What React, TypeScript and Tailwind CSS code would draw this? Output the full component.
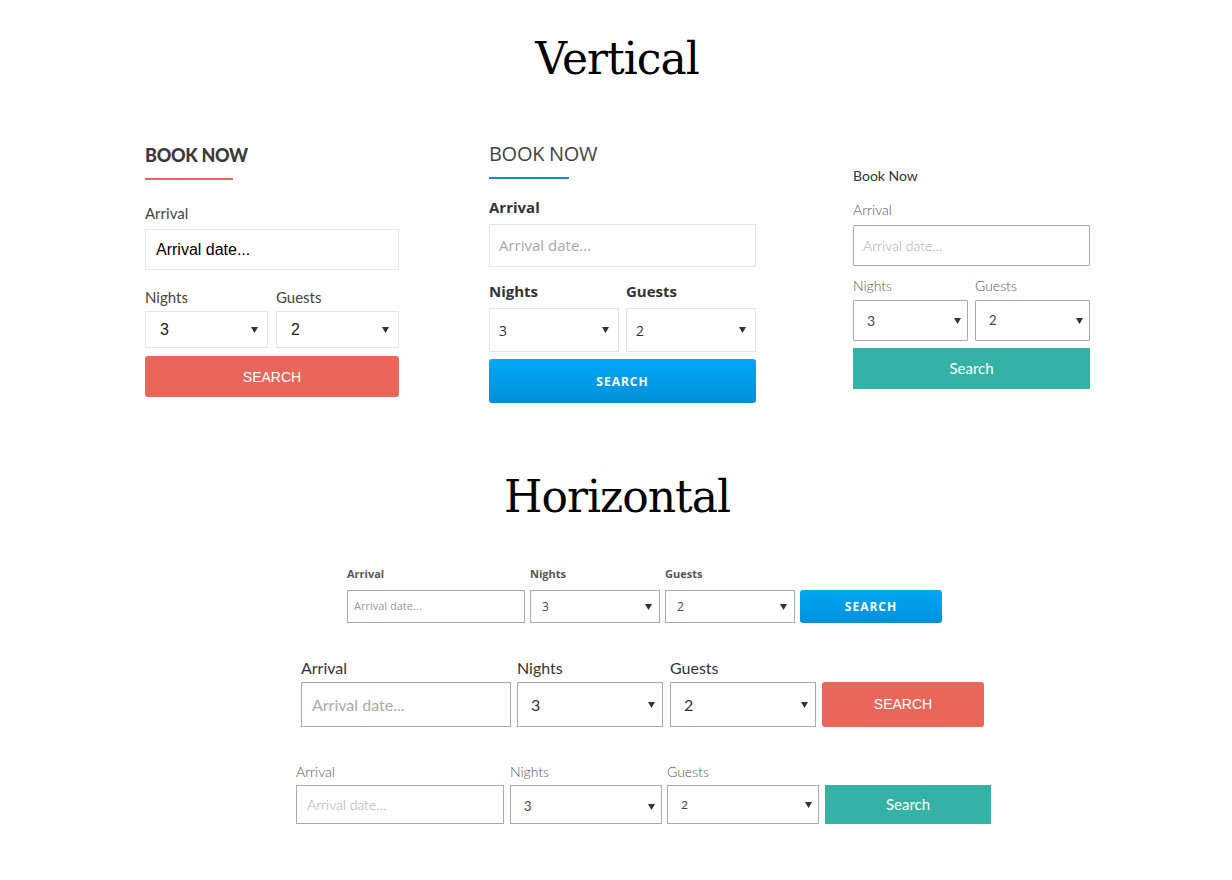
import React from "react";

const LATO = "font-['Lato','Noto_Sans',sans-serif]";
const OPEN = "font-['Open_Sans','Noto_Sans',sans-serif]";
const ARIAL = "font-['Liberation_Sans',Arial,sans-serif]";
const SLAB = "font-['DejaVu_Serif',serif]";

function Arrow({ className = "" }: { className?: string }) {
  return (
    <svg width="7" height="6" viewBox="0 0 7 6" className={className}>
      <path d="M0 0 H7 L3.5 6 Z" fill="#333" />
    </svg>
  );
}

function Box({
  className,
  children,
  arrow,
  arrowClass = "mr-[9px]",
}: {
  className: string;
  children: React.ReactNode;
  arrow?: boolean;
  arrowClass?: string;
}) {
  return (
    <div className={`flex items-center justify-between bg-white ${className}`}>
      <span>{children}</span>
      {arrow && <Arrow className={arrowClass} />}
    </div>
  );
}

export default function App() {
  return (
    <div className="w-[1232px] min-h-[880px] bg-white text-[#444]">
      {/* Title Vertical */}
      <div className="pt-[37px] flex justify-center">
        <h1 className={`${SLAB} text-[44px] leading-[44px] text-black font-normal tracking-[-1px] pl-[2px]`}>
          Vertical
        </h1>
      </div>

      {/* Vertical forms */}
      <div className="mt-[61px] flex items-start pl-[145px]">
        {/* Column 1 */}
        <div className={`${LATO} w-[254px] mt-[2px] flex flex-col`}>
          <div className="h-[22px] leading-[22px] text-[18px] font-black tracking-[-0.3px] text-[#3a3a3a]">BOOK NOW</div>
          <div className="mt-[12px] h-[2px] w-[88px] bg-[#e8665a]" />
          <div className="mt-[24px] h-[18px] leading-[18px] text-[15px] text-[#444]">Arrival</div>
          <Box className={`mt-[7px] h-[41px] border border-[#e6e6e6] pl-[10px] ${ARIAL} text-[16px] text-black`}>
            Arrival date...
          </Box>
          <div className="mt-[18px] flex gap-[8px] h-[18px] leading-[18px] text-[15px] text-[#444]">
            <div className="w-[123px]">Nights</div>
            <div className="w-[123px]">Guests</div>
          </div>
          <div className="mt-[5px] flex gap-[8px]">
            <Box arrow className={`w-[123px] h-[37px] border border-[#e6e6e6] pl-[14px] ${ARIAL} text-[16px] text-[#222]`}>
              3
            </Box>
            <Box arrow className={`w-[123px] h-[37px] border border-[#e6e6e6] pl-[14px] ${ARIAL} text-[16px] text-[#222]`}>
              2
            </Box>
          </div>
          <div className={`mt-[8px] h-[41px] pt-[1px] rounded-[3px] bg-[#e8665a] flex items-center justify-center ${ARIAL} text-[14px] text-white`}>
            SEARCH
          </div>
        </div>

        {/* Column 2 */}
        <div className={`${OPEN} w-[267px] ml-[90px] flex flex-col`}>
          <div className="h-[24px] leading-[24px] text-[20px] text-[#444] tracking-[-0.3px]">BOOK NOW</div>
          <div className="mt-[11px] h-[2px] w-[80px] bg-[#0a8fdc]" />
          <div className="mt-[18px] h-[20px] leading-[20px] text-[15px] font-bold text-[#333]">Arrival</div>
          <Box className="mt-[7px] h-[43px] border border-[#e6e6e6] pl-[9px] text-[15px] text-[#a8a8a8]">
            Arrival date...
          </Box>
          <div className="mt-[14px] flex gap-[7px] h-[20px] leading-[20px] text-[15px] font-bold text-[#333]">
            <div className="w-[130px]">Nights</div>
            <div className="w-[130px]">Guests</div>
          </div>
          <div className="mt-[7px] flex gap-[7px]">
            <Box arrow className="w-[130px] h-[44px] border border-[#e6e6e6] pl-[9px] text-[14px] text-[#333]">
              3
            </Box>
            <Box arrow className="w-[130px] h-[44px] border border-[#e6e6e6] pl-[9px] text-[14px] text-[#333]">
              2
            </Box>
          </div>
          <div className="mt-[7px] h-[44px] pt-[1px] rounded-[3px] bg-gradient-to-b from-[#00a8f3] to-[#008fda] flex items-center justify-center text-[12px] font-bold tracking-[1px] text-white">
            SEARCH
          </div>
        </div>

        {/* Column 3 */}
        <div className={`${LATO} w-[237px] ml-[97px] mt-[25px] flex flex-col`}>
          <div className="h-[18px] leading-[18px] text-[14px] text-[#333]">Book Now</div>
          <div className="mt-[16px] h-[18px] leading-[18px] text-[14px] font-light text-[#555]">Arrival</div>
          <Box className="mt-[6px] h-[41px] border border-[#aaa] rounded-[1px] pl-[9px] text-[14px] font-light text-[#aaa]">
            Arrival date...
          </Box>
          <div className="mt-[11px] flex gap-[7px] h-[18px] leading-[18px] text-[14px] font-light text-[#555]">
            <div className="w-[115px]">Nights</div>
            <div className="w-[115px]">Guests</div>
          </div>
          <div className="mt-[5px] flex gap-[7px]">
            <Box arrow arrowClass="mr-[6px]" className="w-[115px] h-[41px] border border-[#aaa] rounded-[1px] pl-[13px] text-[14px] text-[#444]">
              3
            </Box>
            <Box arrow arrowClass="mr-[6px]" className="w-[115px] h-[41px] border border-[#aaa] rounded-[1px] pl-[13px] text-[13px] text-[#444]">
              2
            </Box>
          </div>
          <div className="mt-[7px] h-[41px] bg-[#35b2a6] flex items-center justify-center text-[15px] text-white">
            Search
          </div>
        </div>
      </div>

      {/* Title Horizontal */}
      <div className="mt-[72px] flex justify-center">
        <h1 className={`${SLAB} text-[44px] leading-[44px] text-black font-normal tracking-[-1px] pl-[2px]`}>
          Horizontal
        </h1>
      </div>

      {/* Row 1 - Open Sans small */}
      <div className={`${OPEN} mt-[48px] pl-[347px] flex flex-col`}>
        <div className="flex gap-[5px] h-[14px] leading-[14px] text-[11px] font-bold text-[#555]">
          <div className="w-[178px]">Arrival</div>
          <div className="w-[130px]">Nights</div>
          <div className="w-[130px]">Guests</div>
        </div>
        <div className="mt-[9px] flex gap-[5px]">
          <Box className="w-[178px] h-[33px] border border-[#aaa] pl-[6px] text-[11px] text-[#999]">
            Arrival date...
          </Box>
          <Box arrow arrowClass="mr-[7px]" className="w-[130px] h-[33px] border border-[#aaa] pl-[11px] text-[12px] text-[#444]">
            3
          </Box>
          <Box arrow arrowClass="mr-[7px]" className="w-[130px] h-[33px] border border-[#aaa] pl-[11px] text-[12px] text-[#444]">
            2
          </Box>
          <div className="w-[142px] h-[33px] rounded-[3px] bg-gradient-to-b from-[#00a8f3] to-[#008fda] flex items-center justify-center text-[12px] font-bold tracking-[1px] text-white">
            SEARCH
          </div>
        </div>
      </div>

      {/* Row 2 - Lato red */}
      <div className={`${LATO} mt-[36px] pl-[301px] flex flex-col`}>
        <div className="flex h-[18px] leading-[18px] text-[16px] text-[#333]">
          <div className="w-[210px]">Arrival</div>
          <div className="w-[146px] ml-[6px]">Nights</div>
          <div className="w-[146px] ml-[7px]">Guests</div>
        </div>
        <div className="mt-[5px] flex">
          <Box className="w-[210px] h-[45px] border border-[#aaa] pl-[10px] text-[16px] text-[#aaa]">
            Arrival date...
          </Box>
          <Box arrow arrowClass="mr-[7px]" className="ml-[6px] w-[146px] h-[45px] border border-[#aaa] pl-[13px] text-[16px] text-[#333]">
            3
          </Box>
          <Box arrow arrowClass="mr-[7px]" className="ml-[7px] w-[146px] h-[45px] border border-[#aaa] pl-[13px] text-[16px] text-[#333]">
            2
          </Box>
          <div className={`ml-[6px] w-[162px] h-[45px] rounded-[3px] bg-[#e8665a] flex items-center justify-center ${ARIAL} text-[14px] text-white`}>
            SEARCH
          </div>
        </div>
      </div>

      {/* Row 3 - teal */}
      <div className={`${LATO} mt-[36px] pl-[296px] flex flex-col`}>
        <div className="flex h-[18px] leading-[18px] text-[14px] font-light text-[#555]">
          <div className="w-[208px]">Arrival</div>
          <div className="w-[152px] ml-[6px]">Nights</div>
          <div className="w-[152px] ml-[5px]">Guests</div>
        </div>
        <div className="mt-[4px] flex">
          <Box className="w-[208px] h-[39px] border border-[#aaa] pl-[10px] text-[14px] font-light text-[#aaa]">
            Arrival date...
          </Box>
          <Box arrow arrowClass="mr-[6px]" className="ml-[6px] w-[152px] h-[39px] border border-[#aaa] pl-[13px] pt-[4px] text-[13px] text-[#444]">
            3
          </Box>
          <Box arrow arrowClass="mr-[6px]" className="ml-[5px] w-[152px] h-[39px] border border-[#aaa] pl-[13px] text-[12px] text-[#444]">
            2
          </Box>
          <div className="ml-[6px] w-[166px] h-[39px] bg-[#35b2a6] flex items-center justify-center text-[15px] text-white">
            Search
          </div>
        </div>
      </div>
    </div>
  );
}
